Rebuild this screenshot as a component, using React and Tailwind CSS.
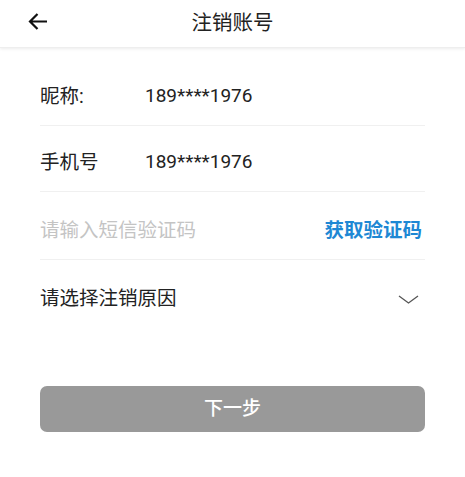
import React from "react";

const font = { fontFamily: 'Roboto, "Noto Sans CJK SC", sans-serif' };

export default function App() {
  return (
    <div className="w-[465px] h-[477px] bg-white overflow-hidden" style={font}>
      <div className="relative h-[48px] flex items-center justify-center bg-white shadow-[0_1px_3px_rgba(0,0,0,0.08)] border-b border-[#eeeeee]">
        <svg className="absolute left-[28px] top-[12px]" width="20" height="19" viewBox="0 0 20 19" fill="none">
          <path d="M19 9.5H2M9.5 2L2 9.5L9.5 17" stroke="#111" strokeWidth="2.2" strokeLinecap="butt" strokeLinejoin="miter" />
        </svg>
        <span className="text-[20.5px] text-[#222] leading-none">注销账号</span>
      </div>
      <div className="px-[40px] pt-[12px]">
        <div className="h-[66px] pt-[8px] flex items-center border-b border-[#f0f0f0] text-[19.5px] text-[#222]">
          <span className="w-[105px]">昵称:</span>
          <span className="text-[19px]">189****1976</span>
        </div>
        <div className="h-[66px] pt-[8px] flex items-center border-b border-[#f0f0f0] text-[19.5px] text-[#222]">
          <span className="w-[105px]">手机号</span>
          <span className="text-[19px]">189****1976</span>
        </div>
        <div className="h-[68px] pt-[10px] flex items-center justify-between border-b border-[#f0f0f0] text-[19.5px]">
          <span className="text-[#c4c4c4]">请输入短信验证码</span>
          <span className="text-[#1e88d4] font-bold mr-[3px]">获取验证码</span>
        </div>
        <div className="h-[76px] pt-[2px] flex items-center justify-between text-[19.5px] text-[#222]">
          <span>请选择注销原因</span>
          <svg width="21" height="9" viewBox="0 0 21 9" fill="none" className="mr-[6px]">
            <path d="M1 1L10.5 8L20 1" stroke="#555" strokeWidth="1.3" />
          </svg>
        </div>
        <div className="mt-[50px] h-[46px] rounded-[7px] bg-[#999999] flex items-center justify-center">
          <span className="text-white text-[19px] font-medium">下一步</span>
        </div>
      </div>
    </div>
  );
}
